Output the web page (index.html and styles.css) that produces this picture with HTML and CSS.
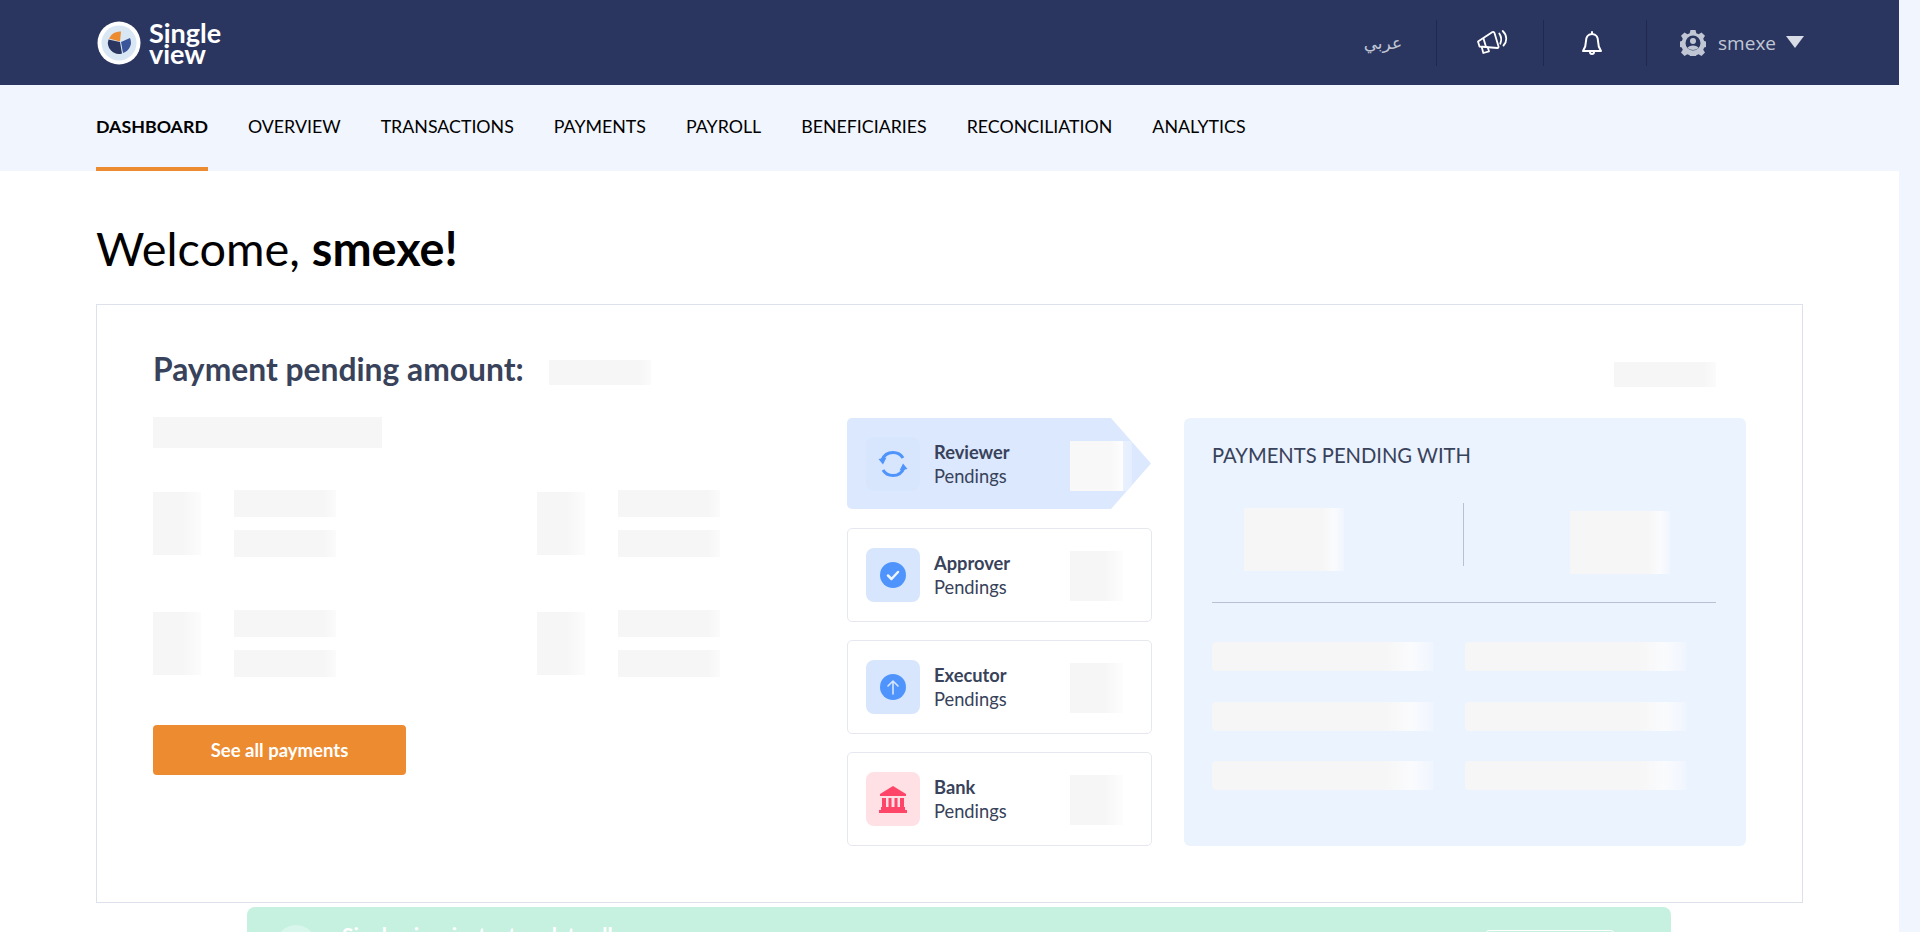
FILE: index.html
```html
<!DOCTYPE html>
<html>
  <head>
    <title>Single view - Dashboard</title>
    <link rel="stylesheet" href="styles.css">
  </head>
  <body>
    <div class="page">
      <header class="topbar">
        <div class="logo">
          <svg class="logo-mark" width="44" height="44" viewBox="0 0 44 44">
            <circle cx="22" cy="22" r="21.5" fill="#fff"/>
            <circle cx="22" cy="22" r="17.5" fill="#d9e7f5"/>
            <path d="M23 21 L11.500 18.500 A11 11 0 0 0 25 32.500 Z" fill="#2b3660"/>
            <path d="M24 21 L33 17 A11 11 0 0 1 26 32 Z" fill="#3a5599"/>
            <path d="M23 20.500 L12 17.500 A12 12 0 0 1 24 10.500 Z" fill="#ec8b2f"/>
          </svg>
          <div class="logo-text">Single<br>view</div>
        </div>
        <div class="top-actions">
          <div class="top-item lang" dir="rtl" lang="ar">عربي</div>
          <div class="top-item announce">
            <svg width="32" height="26" viewBox="0 0 32 26" fill="none" stroke="#fff" stroke-width="1.800" stroke-linejoin="round" stroke-linecap="round">
              <path d="M2 11.500 L16.500 2 Q18 1.500 18.500 3 L22.500 16.500 Q22.800 18 21.300 18 L3.500 16.500 Z"/>
              <path d="M7.500 8.500 L10 17"/>
              <path d="M5.700 17 L7.300 23 L13 21.300 L11.700 17.300"/>
              <path d="M23.300 3.500 C25.300 6.500 25.600 10.500 24.300 13.700"/>
              <path d="M26.700 1 C31 5 31.500 11.500 27.500 15.500"/>
            </svg>
          </div>
          <div class="top-item bell">
            <svg width="20" height="25" viewBox="0 0 20 25" fill="none" stroke="#fff" stroke-width="2" stroke-linejoin="round" stroke-linecap="round">
              <path d="M10 3 C5.500 3 4 7 4 10 C4 15 3 17 1 20 L19 20 C17 17 16 15 16 10 C16 7 14.500 3 10 3 Z"/>
              <path d="M10 1 L10 3"/>
              <path d="M8 21 C8 23.500 12 23.500 12 21"/>
            </svg>
          </div>
          <div class="top-item user">
            <svg class="gear" width="26" height="26" viewBox="0 0 26 26">
              <path fill="#c0c6d4" d="M10.500 0.500 h5 l0.800 3.300 l2.300 1 l2.900 -1.800 l3.500 3.500 l-1.800 2.900 l1 2.300 l3.300 0.800 v5 l-3.300 0.800 l-1 2.300 l1.800 2.900 l-3.500 3.500 l-2.900 -1.800 l-2.300 1 l-0.800 3.300 h-5 l-0.800 -3.300 l-2.300 -1 l-2.900 1.800 l-3.500 -3.500 l1.800 -2.900 l-1 -2.300 l-3.300 -0.800 v-5 l3.300 -0.800 l1 -2.300 l-1.800 -2.900 l3.500 -3.500 l2.900 1.800 l2.300 -1 Z" transform="translate(0 -0.500) scale(1 .98)"/>
              <circle cx="13" cy="13" r="7.500" fill="#2b3660"/>
              <circle cx="13" cy="11" r="3" fill="#c0c6d4"/>
              <path d="M7.500 18 C8.500 14.500 17.500 14.500 18.500 18 C16 20.500 10 20.500 7.500 18 Z" fill="#c0c6d4"/>
            </svg>
            <span class="user-name">smexe</span>
            <span class="caret"></span>
          </div>
        </div>
      </header>

      <nav class="subnav">
        <a class="active">DASHBOARD</a>
        <a>OVERVIEW</a>
        <a>TRANSACTIONS</a>
        <a>PAYMENTS</a>
        <a>PAYROLL</a>
        <a>BENEFICIARIES</a>
        <a>RECONCILIATION</a>
        <a>ANALYTICS</a>
      </nav>

      <main class="content">
        <h1 class="welcome">Welcome, <b>smexe!</b></h1>

        <section class="card">
          <div class="card-head">
            <h2 class="amount-title">Payment pending amount:</h2>
            <div class="skel skel-amount"></div>
            <div class="skel skel-date"></div>
          </div>

          <div class="card-body">
            <div class="summary">
              <div class="skel skel-big"></div>
              <div class="stats">
                <div class="stat">
                  <div class="skel skel-square"></div>
                  <div class="stat-lines"><div class="skel skel-line"></div><div class="skel skel-line"></div></div>
                </div>
                <div class="stat">
                  <div class="skel skel-square"></div>
                  <div class="stat-lines"><div class="skel skel-line"></div><div class="skel skel-line"></div></div>
                </div>
                <div class="stat">
                  <div class="skel skel-square"></div>
                  <div class="stat-lines"><div class="skel skel-line"></div><div class="skel skel-line"></div></div>
                </div>
                <div class="stat">
                  <div class="skel skel-square"></div>
                  <div class="stat-lines"><div class="skel skel-line"></div><div class="skel skel-line"></div></div>
                </div>
              </div>
              <button class="see-all">See all payments</button>
            </div>

            <div class="steps">
              <div class="step current">
                <div class="step-icon">
                  <svg width="30" height="30" viewBox="0 0 30 30" fill="none" stroke="#4f94fc" stroke-width="3">
                    <path d="M4 11 C6 6 10 3.500 15 3.500 C19.500 3.500 23 5.500 25 9"/>
                    <path d="M26 19 C24 24 20 26.500 15 26.500 C10.500 26.500 7 24.500 5 21"/>
                    <path d="M0.500 10 L8.500 8.500 L5 15.500 Z" fill="#4f94fc" stroke="none"/>
                    <path d="M29.500 20 L21.500 21.500 L25 14.500 Z" fill="#4f94fc" stroke="none"/>
                  </svg>
                </div>
                <div class="step-text"><b>Reviewer</b><span>Pendings</span></div>
                <div class="skel skel-count"></div>
              </div>
              <div class="step">
                <div class="step-icon">
                  <svg width="26" height="26" viewBox="0 0 26 26">
                    <circle cx="13" cy="13" r="13" fill="#4f94fc"/>
                    <path d="M8 13.500 L11.500 17 L18 10" fill="none" stroke="#fff" stroke-width="2.500" stroke-linecap="round" stroke-linejoin="round" opacity=".9"/>
                  </svg>
                </div>
                <div class="step-text"><b>Approver</b><span>Pendings</span></div>
                <div class="skel skel-count"></div>
              </div>
              <div class="step">
                <div class="step-icon">
                  <svg width="26" height="26" viewBox="0 0 26 26">
                    <circle cx="13" cy="13" r="13" fill="#4f94fc"/>
                    <path d="M13 20 V7 M8 12 L13 7 L18 12" fill="none" stroke="#d8e6fd" stroke-width="1.600" stroke-linecap="round" stroke-linejoin="round"/>
                  </svg>
                </div>
                <div class="step-text"><b>Executor</b><span>Pendings</span></div>
                <div class="skel skel-count"></div>
              </div>
              <div class="step">
                <div class="step-icon bank">
                  <svg width="28" height="27" viewBox="0 0 28 27" fill="#ff4568">
                    <path d="M14 0 L27 8 V10 H1 V8 Z"/>
                    <rect x="3" y="12" width="4" height="9"/>
                    <rect x="9.500" y="12" width="3" height="9"/>
                    <rect x="15.500" y="12" width="3" height="9"/>
                    <rect x="21" y="12" width="4" height="9"/>
                    <rect x="2" y="21" width="24" height="3"/>
                    <rect x="0" y="24" width="28" height="3"/>
                  </svg>
                </div>
                <div class="step-text"><b>Bank</b><span>Pendings</span></div>
                <div class="skel skel-count"></div>
              </div>
            </div>

            <div class="pending-with">
              <h3>PAYMENTS PENDING WITH</h3>
              <div class="split">
                <div class="split-cell"><div class="skel skel-total"></div></div>
                <div class="split-cell second"><div class="skel skel-total"></div></div>
              </div>
              <div class="bars">
                <div class="skel skel-bar"></div>
                <div class="skel skel-bar"></div>
                <div class="skel skel-bar"></div>
                <div class="skel skel-bar"></div>
                <div class="skel skel-bar"></div>
                <div class="skel skel-bar"></div>
              </div>
            </div>
          </div>
        </section>

        <div class="alert-banner">
          <span class="alert-dot"></span>
          <span class="alert-text">Single view instant update all</span>
          <span class="alert-btn"></span>
        </div>
      </main>
    </div>
  </body>
</html>
```
FILE: styles.css
```css
* {
  box-sizing: border-box;
}

html, body {
  margin: 0;
  height: 932px;
  overflow: hidden;
}

body {
  background-color: #f1f5fd;
  font-family: "Lato", "Noto Sans", sans-serif;
  color: #38425a;
}

.page {
  width: 1899px;
  height: 932px;
  background-color: white;
  overflow: hidden;
}

/* top bar */
.topbar {
  height: 85px;
  padding: 0 95px 0 96px;
  background-color: #2b3660;
  display: flex;
  align-items: center;
  justify-content: space-between;
}

.logo {
  display: flex;
  align-items: center;
  gap: 8px;
}

.logo-mark {
  margin-left: 1px;
}

.logo-text {
  color: white;
  font-size: 27px;
  font-weight: 700;
  line-height: 21px;
}

.top-actions {
  display: flex;
  align-items: center;
  height: 46px;
  margin-top: 1px;
}

.top-item {
  height: 46px;
  display: flex;
  align-items: center;
  border-right: 1px solid #1f2950;
}

.lang {
  width: 72px;
  padding-right: 34px;
  color: #c0c6d4;
  font-family: "DejaVu Sans", sans-serif;
  font-size: 17px;
}

.announce {
  width: 107px;
  justify-content: center;
  padding-left: 4px;
}

.bell {
  width: 103px;
  justify-content: center;
  padding-right: 6px;
}

.user {
  border-right: 0;
  padding-left: 33px;
  color: #c0c6d4;
}

.user-name {
  margin-left: 12px;
  font-size: 19px;
  font-family: "Open Sans", sans-serif;
}

.caret {
  margin-left: 10px;
  margin-top: -2px;
  border-left: 9px solid transparent;
  border-right: 9px solid transparent;
  border-top: 12px solid #d8dce6;
}

/* second row of links */
.subnav {
  height: 86px;
  padding: 0 96px;
  background-color: #f1f5fd;
  display: flex;
  gap: 40px;
}

.subnav a {
  height: 86px;
  padding-top: 30px;
  font-size: 17.800px;
  line-height: 22px;
  color: black;
}

.subnav a.active {
  font-weight: 700;
  border-bottom: 4px solid #ec8b2f;
}

.content {
  padding: 0 96px;
}

.welcome {
  margin: 0;
  padding-top: 47px;
  height: 133px;
  font-size: 46.800px;
  line-height: 60px;
  font-weight: 400;
  color: black;
}

.welcome b {
  font-weight: 700;
}

/* skeleton placeholders */
.skel {
  background-image: linear-gradient(90deg, #f6f6f6 88%, #fbfbfb 100%);
}

.card {
  width: 1707px;
  height: 599px;
  border: 1px solid #dde1ec;
  padding: 55px 46px 0 56px;
}

.card-head {
  display: flex;
  align-items: flex-start;
  height: 57px;
}

.amount-title {
  margin: -9px 0 0 0;
  width: 396px;
  font-size: 31.800px;
  line-height: 36px;
  font-weight: 700;
  color: #38425a;
}

.skel-amount {
  width: 102px;
  height: 25px;
}

.skel-date {
  width: 102px;
  height: 25px;
  margin-top: 2px;
  margin-left: auto;
  margin-right: 40px;
}

.card-body {
  display: flex;
  align-items: flex-start;
}

.summary {
  width: 694px;
}

.skel-big {
  width: 229px;
  height: 31px;
  background-image: none;
  background-color: #f6f6f6;
}

.stats {
  display: grid;
  grid-template-columns: 384px 183px;
  row-gap: 53px;
  margin-top: 42px;
}

.stat {
  display: flex;
  gap: 33px;
}

.skel-square {
  width: 48px;
  height: 63px;
  margin-top: 2px;
  background-image: linear-gradient(90deg, #f6f6f6 62%, #fcfcfc 100%);
}

.stat-lines {
  display: flex;
  flex-direction: column;
  gap: 13px;
}

.skel-line {
  width: 102px;
  height: 27px;
}

.see-all {
  display: block;
  width: 253px;
  height: 50px;
  margin-top: 48px;
  border: 0;
  border-radius: 4px;
  background-color: #ec8b2f;
  color: white;
  font-family: "Lato", sans-serif;
  font-size: 18.500px;
  font-weight: 700;
}

/* steps column */
.steps {
  width: 305px;
  margin-top: 1px;
  display: flex;
  flex-direction: column;
  gap: 18px;
}

.step {
  height: 94px;
  padding: 0 0 0 18px;
  display: flex;
  align-items: center;
  border: 1px solid #e5e8ee;
  border-radius: 5px;
}

.step.current {
  width: 304px;
  height: 91px;
  margin-bottom: 1px;
  border: 0;
  padding-left: 19px;
  background-color: #dbe8fe;
  clip-path: polygon(0 1px, 1px 0, 264px 0, 304px 50%, 264px 100%, 1px 100%, 0 90px);
}

.step-icon {
  width: 54px;
  height: 54px;
  flex-shrink: 0;
  border-radius: 8px;
  background-color: #d8e6fd;
  display: flex;
  align-items: center;
  justify-content: center;
}

.step-icon.bank {
  background-color: #ffe0e5;
}

.step-text {
  width: 150px;
  padding-left: 14px;
  display: flex;
  flex-direction: column;
  font-size: 18.300px;
  line-height: 24px;
}

.step-text b {
  font-weight: 700;
}

.skel-count {
  width: 53px;
  height: 50px;
  margin-top: 1px;
  background-image: linear-gradient(90deg, #f6f6f6 65%, #fdfdfd 100%);
}

.current .skel-count {
  width: 62px;
  margin-top: 5px;
  background-image: linear-gradient(90deg, #f8f8f8 65%, #fdfdfd 85%, #e9f1fe 85%, #e4eefe 100%);
}

/* pending with panel */
.pending-with {
  width: 562px;
  height: 428px;
  margin-top: 1px;
  margin-left: 32px;
  padding: 24px 30px 0 28px;
  background-color: #ebf3fe;
  border-radius: 6px;
}

.pending-with h3 {
  margin: 0;
  font-size: 20.200px;
  line-height: 26px;
  font-weight: 400;
  color: #38425a;
}

.pending-with .skel {
  background-image: linear-gradient(90deg, #f6f6f6 78%, #fafbfd 90%, #f0f5fe 100%);
}

.split {
  height: 100px;
  margin-top: 35px;
  display: flex;
  border-bottom: 1px solid #b8c1d1;
}

.split-cell {
  height: 63px;
  width: 254px;
  padding: 5px 0 0 32px;
  border-right: 1px solid #b8c1d1;
}

.split-cell.second {
  border-right: 0;
  padding: 8px 0 0 106px;
}

.skel-total {
  width: 100px;
  height: 63px;
}

.bars {
  display: grid;
  grid-template-columns: 221px 221px;
  column-gap: 32px;
  row-gap: 30.500px;
  margin-top: 39px;
}

.skel-bar {
  height: 29px;
  border-radius: 4px 0 0 4px;
}

/* green banner cut off by the window */
.alert-banner {
  width: 1424px;
  height: 90px;
  margin: 4px 0 0 151px;
  padding: 18px 57px 0 29px;
  display: flex;
  align-items: flex-start;
  background-color: #c6f1e1;
  border-radius: 8px 8px 0 0;
}

.alert-dot {
  width: 40px;
  height: 40px;
  border-radius: 50%;
  background-color: #d8f6eb;
}

.alert-text {
  margin-left: 26px;
  margin-top: -3px;
  color: white;
  font-size: 21px;
  font-weight: 700;
}

.alert-btn {
  width: 128px;
  height: 40px;
  margin-left: auto;
  margin-top: 5px;
  border: 1px solid white;
  border-radius: 3px;
}
```
